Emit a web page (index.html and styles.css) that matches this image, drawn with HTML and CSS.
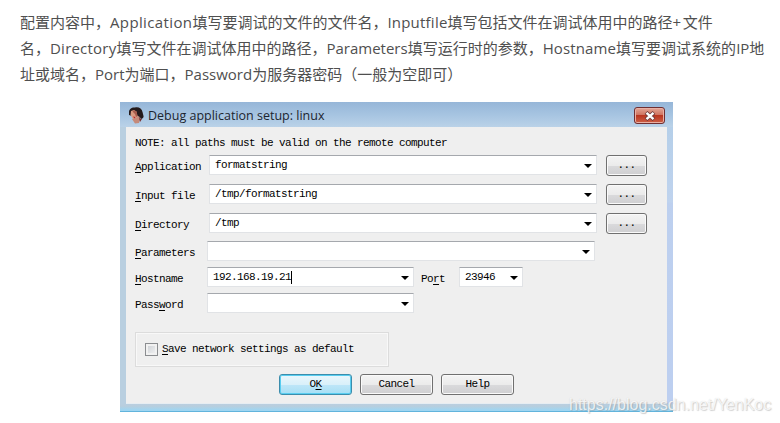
FILE: index.html
```
<!DOCTYPE html>
<html lang="zh-CN">
<head>
<meta charset="utf-8">
<title>Debug application setup</title>
<link rel="stylesheet" href="styles.css">
</head>
<body>
<div class="intro">
<p>配置内容中，<span class="en loose">Application</span>填写要调试的文件的文件名，<span class="en medium">Inputfile</span>填写包括文件在调试体用中的路径<span class="en plus">+</span>文件</p>
<p>名，<span class="en medium">Directory</span>填写文件在调试体用中的路径，<span class="en">Parameters</span>填写运行时的参数，<span class="en slight">Hostname</span>填写要调试系统的<span class="en">IP</span>地</p>
<p>址或域名，<span class="en">Port</span>为端口，<span class="en">Password</span>为服务器密码（一般为空即可）</p>
</div>
<div class="window">
  <div class="titlebar">
    <svg class="face" width="16" height="17" viewBox="0 0 16 17">
      <path d="M1 5C1 2 4 0 7 .5C10-.5 14 1 14.500 5L15.500 9C16 11 14 12 13 12L11 8L7 5L4 9L1 8Z" fill="#241a1b"/>
      <path d="M3 4L6 3L9 5L10 9L8 13L5 12L2.500 8Z" fill="#d99a80"/>
      <path d="M6 3L9 5L10 9L8 10L7 7L4.500 4.500Z" fill="#a85c4c"/>
      <path d="M9 2L13 4L14 10L11 11L9 7Z" fill="#241a1b"/>
      <path d="M4 12L8 11L11 9L12 12L11 16L7 16.500Z" fill="#c58a7a"/>
      <path d="M5 9.500L7.500 10L6.500 11.500Z" fill="#b91f29"/>
      <path d="M11 11L14 12L12 15Z" fill="#7b3030"/>
    </svg>
    <span class="title">Debug application setup: linux</span>
    <span class="close"><svg width="12" height="10" viewBox="0 0 12 10"><path d="M2 1.500L10 8.500M10 1.500L2 8.500" stroke="#6b3b3b" stroke-width="4"/><path d="M2.500 1.800L9.500 8.200M9.500 1.800L2.500 8.200" stroke="#fff" stroke-width="2.400"/></svg></span>
  </div>
  <div class="client">
    <div class="note">NOTE: all paths must be valid on the remote computer</div>
    <div class="row tall"><label><u>A</u>pplication</label><div class="combo">formatstring<i></i></div><span class="btn browse">...</span></div>
    <div class="row tall"><label><u>I</u>nput file</label><div class="combo">/tmp/formatstring<i></i></div><span class="btn browse">...</span></div>
    <div class="row tall"><label><u>D</u>irectory</label><div class="combo">/tmp<i></i></div><span class="btn browse">...</span></div>
    <div class="row"><label><u>P</u>arameters</label><div class="combo"><i></i></div></div>
    <div class="row"><label><u>H</u>ostname</label><div class="combo mid"><span class="caret">192.168.19.21</span><i></i></div><label class="portlabel">Po<u>r</u>t</label><div class="combo port">23946<i></i></div></div>
    <div class="row"><label>Pass<u>w</u>ord</label><div class="combo mid"><i></i></div></div>
    <div class="group"><span class="check"></span><span><u>S</u>ave network settings as default</span></div>
    <div class="actions"><span class="btn ok">O<u>K</u></span><span class="btn">Cancel</span><span class="btn">Help</span></div>
  </div>
</div>
<div class="watermark">https://blog.csdn.net/YenKoc</div>
</body>
</html>
```
FILE: styles.css
```
* { box-sizing: border-box; }
body {
  margin: 0;
  width: 780px;
  height: 423px;
  overflow: hidden;
  background: #fff;
  position: relative;
}
.intro {
  padding: 9px 0 0 20px;
  height: 102px;
  color: #4f4f4f;
  font: 15px/26px "Noto Sans CJK SC", sans-serif;
}
.intro p { margin: 0; white-space: nowrap; }
.en { font-family: "Open Sans", "Noto Sans", sans-serif; }
.loose { letter-spacing: .37px; }
.medium { letter-spacing: .22px; }
.slight { letter-spacing: .13px; }
.plus { letter-spacing: 1.5px; }
.window {
  width: 553px;
  height: 310px;
  margin-left: 120px;
  padding: 0 6px 7px 6px;
  border-bottom: 1px solid #62b4dc;
  background: linear-gradient(#9dbddd 0, #b5cfe9 24px, #bfd3ee 100px, transparent 101px) right top / 6px 100% no-repeat,
    linear-gradient(#bdd0ee, #bdcff0) right top / 6px 302px no-repeat,
    linear-gradient(#b9cfe0 302px, #b9cedd 304px, #9fd5f1 308px),
    #b7d0e2;
}
.titlebar {
  height: 25px;
  margin: 0 -6px;
  padding: 0 8px;
  display: flex;
  align-items: center;
  background: linear-gradient(#96b6d8, #a6c4e1 50%, #bad2e8);
}
.face { flex: none; margin-top: 1px; }
.title {
  margin-left: 4px;
  padding-top: 2px;
  flex: 1;
  color: #1c2530;
  font: 12.500px/22px "Open Sans", sans-serif;
  white-space: nowrap;
}
.close {
  width: 31px;
  height: 17px;
  margin-top: 2px;
  display: flex;
  align-items: center;
  justify-content: center;
  border: 1px solid #6f2f32;
  border-radius: 3px;
  background: linear-gradient(#e3a595, #cf7562 45%, #b93620 50%, #cd6047);
  box-shadow: inset 0 0 0 1px #e9b0a4;
}
.client {
  height: 277px;
  padding: 8px 9px 0;
  background: #efefef;
  border-bottom: 1px solid #e6edf2;
  color: #000;
  font: 11px/15px "Liberation Mono", monospace;
  letter-spacing: -0.6px;
  white-space: nowrap;
}
.note { height: 20px; line-height: 17px; }
.row { display: flex; height: 26px; align-items: flex-start; }
.row.tall { height: 29px; }
.row.tall + .row:not(.tall) { margin-top: -1px; }
label { width: 72px; line-height: 22px; padding-top: 1px; }
.row.tall label { width: 74px; }
u { text-underline-offset: 2px; text-decoration-thickness: 1px; }
.combo {
  width: 388px;
  height: 20px;
  padding: 1px 4px 0 5px;
  display: flex;
  align-items: center;
  justify-content: space-between;
  background: #fff;
  border: 1px solid #e1e3e6;
  border-top-color: #a5a8ad;
}
.combo i {
  margin-left: auto;
  border: 4px solid transparent;
  border-top-color: #000;
  border-bottom: 0;
}
.mid { width: 207px; }
.row label.portlabel { width: 45px; padding-left: 7px; }
.port { width: 64px; }
.caret { border-right: 1px solid #000; line-height: 13px; }
.btn {
  width: 73px;
  height: 21px;
  line-height: 19px;
  text-align: center;
  border: 1px solid #707070;
  border-radius: 3px;
  background: linear-gradient(#f4f4f4, #ebebeb 50%, #dadadc 51%, #cfcfd1);
  box-shadow: inset 0 0 0 1px #fafafa;
}
.browse { width: 41px; margin-left: 9px; }
.group {
  width: 254px;
  height: 35px;
  margin: 13px 0 7px;
  padding-left: 9px;
  display: flex;
  align-items: center;
  gap: 4px;
  border: 1px solid #dcdcdc;
  box-shadow: inset 0 0 0 1px #f8f8f8;
}
.check {
  width: 13px;
  height: 13px;
  border: 1px solid #8b8d90;
  background: linear-gradient(135deg, #c9cdd2, #f5f5f5);
  box-shadow: inset 0 0 0 2px #f1f1f1;
}
.actions { display: flex; gap: 8px; padding-left: 144px; }
.ok {
  border-color: #3c8dac;
  background: linear-gradient(#eaf7fc, #d9f0fa 50%, #bee6f8 51%, #a6dff5);
  box-shadow: inset 0 0 0 1px #58cdf0;
}
.watermark {
  position: absolute;
  left: 569px;
  top: 395px;
  color: rgba(255, 255, 255, .8);
  text-shadow: 1px 1px 1px rgba(140, 140, 140, .4), 0 0 1px rgba(140, 140, 140, .3);
  font: 16px/20px "Liberation Sans", sans-serif;
  white-space: nowrap;
}
```
